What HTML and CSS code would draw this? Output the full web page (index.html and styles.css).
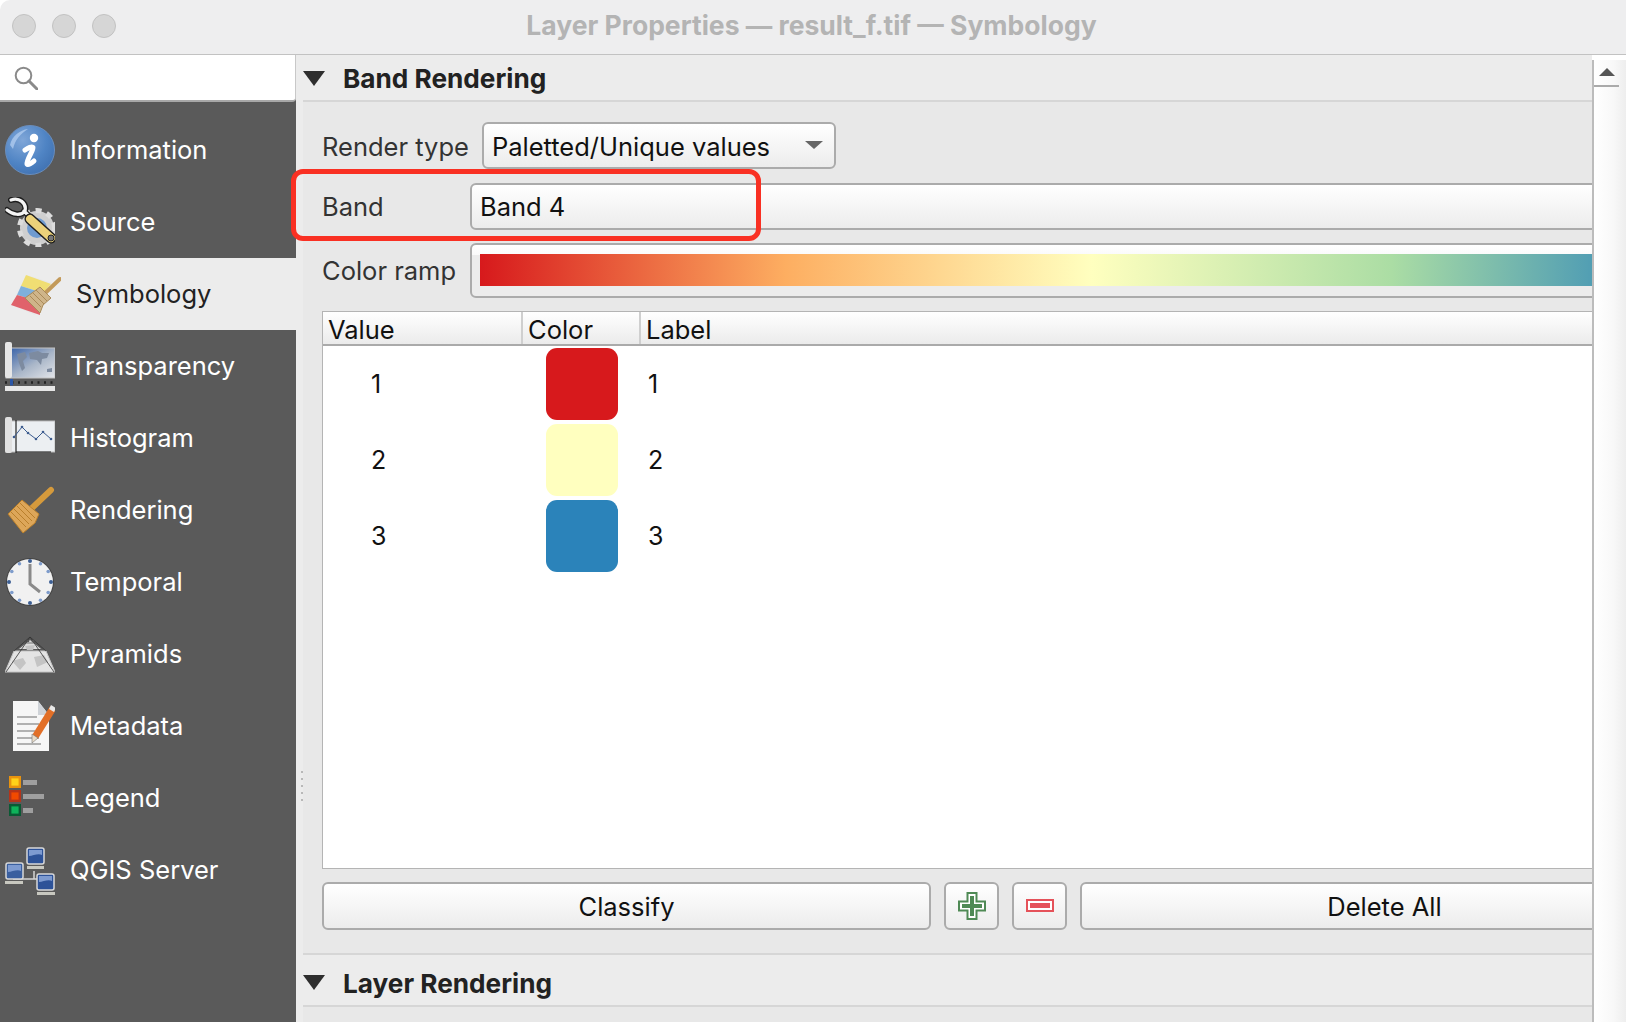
FILE: index.html
```html
<!DOCTYPE html>
<html lang="en">
<head>
<meta charset="utf-8">
<title>Layer Properties — result_f.tif — Symbology</title>
<link rel="stylesheet" href="styles.css">
</head>
<body>
<div class="window">
  <header class="titlebar">
    <div class="lights"><span class="light"></span><span class="light"></span><span class="light"></span></div>
    <div class="title">Layer Properties — result_f.tif — Symbology</div>
  </header>
  <div class="content">
    <aside class="sidebar">
      <div class="search">
        <svg class="search-icon" viewBox="0 0 24 24"><circle cx="9.5" cy="9.5" r="7.8" fill="none" stroke="#8a8a8a" stroke-width="2"/><path d="M15 15l8 8" stroke="#8a8a8a" stroke-width="3" stroke-linecap="round"/></svg>
      </div>
      <nav class="nav">
        <div class="nav-item">
          <svg class="nav-icon" viewBox="0 0 50 50"><defs><radialGradient id="ib" cx=".35" cy=".3" r=".8"><stop offset="0" stop-color="#7fa6d8"/><stop offset=".6" stop-color="#4f84c4"/><stop offset="1" stop-color="#3f70b0"/></radialGradient></defs><circle cx="25" cy="25" r="24.5" fill="url(#ib)" stroke="#6a8dbb"/><path d="M5 20C7 11 15 5 23 4 15 9 10 15 8 24z" fill="#b3cdf0" opacity=".75"/><circle cx="29" cy="13" r="4.200" fill="#fff"/><path d="M20 25c3-2 7-4 8-2.500 1 2-7 13-6 16.500 1 1.500 5-1 7-3" fill="none" stroke="#fff" stroke-width="5" stroke-linecap="round" stroke-linejoin="round"/></svg>
          <span>Information</span>
        </div>
        <div class="nav-item">
          <svg class="nav-icon" viewBox="0 0 50 50"><circle cx="32" cy="31" r="13" fill="none" stroke="#cfcfcf" stroke-width="8"/><circle cx="32" cy="31" r="17.500" fill="none" stroke="#dcdcdc" stroke-width="5" stroke-dasharray="6 5.500"/><circle cx="32" cy="31" r="10" fill="#6f9bd0"/><path d="M6 3C14 0 22 6 20 14M2 13C8 18 16 19 20 14M19 14L28 23" fill="none" stroke="#1d1d1d" stroke-width="6" stroke-linecap="round"/><path d="M6 3C14 0 22 6 20 14M2 13C8 18 16 19 20 14M19 14L28 23" fill="none" stroke="#f4f4f4" stroke-width="3.200" stroke-linecap="round"/><path d="M25 22L46 41" stroke="#1f1f1f" stroke-width="11" stroke-linecap="round"/><path d="M25 22L46 41" stroke="#ecd27a" stroke-width="8" stroke-linecap="round"/><circle cx="46" cy="41" r="3" fill="#777" stroke="#222"/></svg>
          <span>Source</span>
        </div>
        <div class="nav-item active">
          <svg class="nav-icon" viewBox="0 0 50 50"><path d="M16 6l26 8-18 32L0 36z" fill="#e8e8e8"/><path d="M15 6l25 9-8 9-22-7z" fill="#f0de73"/><path d="M10 17l22 7-8 7-18-5z" fill="#7fb0dc"/><path d="M6 26l18 5 5 11 0 4-29-10z" fill="#e0626b"/><path d="M30 28L49 10" stroke="#c39a5a" stroke-width="4" stroke-linecap="round"/><path d="M21 24l8-6 11 11-8 7-3 8-15-15z" fill="#cfb58a" stroke="#a98a59"/><path d="M19 27l11 11M22 24l11 11M25 21l11 11" stroke="#a98a59"/></svg>
          <span>Symbology</span>
        </div>
        <div class="nav-item">
          <svg class="nav-icon" viewBox="0 0 50 50"><defs><linearGradient id="mp" x1="0" y1="0" x2="1" y2="1"><stop offset="0" stop-color="#2f5ba5"/><stop offset=".55" stop-color="#a9b6c8"/><stop offset="1" stop-color="#e4e6ea"/></linearGradient></defs><rect x="1" y="7" width="49" height="30" fill="url(#mp)" stroke="#c4c4c4"/><rect x="0" y="1" width="7" height="36" rx="2" fill="#e6e6e6"/><path d="M12 13l8-2 2 5-4 4 2 7-3 3-3-8zM24 12l9-2 4 2 7 0-2 5-5 1-1 6-4-5-7-1zM42 28l5-1 0 4-5 0z" fill="#7d8ba0"/><rect x="0" y="45" width="50" height="5" fill="#e6e6e6"/><path d="M0 41.500h50" stroke="#222" stroke-width="2.500" stroke-dasharray="2 4.500"/><rect x="5" y="38" width="3" height="6.500" fill="#2a55a5"/></svg>
          <span>Transparency</span>
        </div>
        <div class="nav-item">
          <svg class="nav-icon" viewBox="0 0 50 50"><rect x="1" y="8" width="49" height="31" fill="#eceff2" stroke="#bbb"/><rect x="0" y="4" width="7" height="36" rx="2" fill="#e0e0e0"/><path d="M11 7v33M11 39h35" stroke="#222" stroke-width="1.200"/><path d="M9 24l8-10 6 6 8 6 7-7 8 7" fill="none" stroke="#3d5c8f" stroke-width="1"/><g fill="#3d5c8f"><circle cx="9" cy="24" r="1.300"/><circle cx="17" cy="14" r="1.300"/><circle cx="23" cy="20" r="1.300"/><circle cx="31" cy="26" r="1.300"/><circle cx="38" cy="19" r="1.300"/><circle cx="46" cy="26" r="1.300"/></g></svg>
          <span>Histogram</span>
        </div>
        <div class="nav-item">
          <svg class="nav-icon" viewBox="0 0 50 50"><path d="M26 24L46 5" stroke="#d59a3c" stroke-width="6" stroke-linecap="round"/><path d="M3 29L17 15 34 29l-4 9-12 10z" fill="#dda659" stroke="#b97f2b"/><path d="M6 27l15 15M9 24l15 15M12 21l15 15M15 18l15 15" stroke="#b97f2b"/></svg>
          <span>Rendering</span>
        </div>
        <div class="nav-item">
          <svg class="nav-icon" viewBox="0 0 50 50"><circle cx="25" cy="25" r="24" fill="#444"/><circle cx="25" cy="25" r="23" fill="#f1f1f1"/><g fill="#3d5f94"><circle cx="25" cy="4" r="2"/><circle cx="25" cy="46" r="2"/><circle cx="4" cy="25" r="2"/><circle cx="46" cy="25" r="2"/></g><g fill="#7d9bcb"><circle cx="14.500" cy="6.800" r="1.800"/><circle cx="35.500" cy="6.800" r="1.800"/><circle cx="6.800" cy="14.500" r="1.800"/><circle cx="43.200" cy="14.500" r="1.800"/><circle cx="6.800" cy="35.500" r="1.800"/><circle cx="43.200" cy="35.500" r="1.800"/><circle cx="14.500" cy="43.200" r="1.800"/><circle cx="35.500" cy="43.200" r="1.800"/></g><path d="M25 7v20l10 8" fill="none" stroke="#8a8a8a" stroke-width="3"/></svg>
          <span>Temporal</span>
        </div>
        <div class="nav-item">
          <svg class="nav-icon" viewBox="0 0 50 50"><path d="M0 43L9 22h32l9 21z" fill="#e4e4e4" stroke="#c4c4c4"/><path d="M14 20L25 11l11 9z" fill="#dcdcdc"/><path d="M7 32l11-3 3 5-6 7zM29 28l10-2 4 7-11 5zM20 17l10-1-2 5-6 0z" fill="#c4c4c4"/><path d="M1 43L25 8l24 35M9 22L25 8l16 14" fill="none" stroke="#333" stroke-width=".8"/><path d="M20 14h10" stroke="#555" stroke-width=".8"/><circle cx="23" cy="12" r="1.300" fill="#555"/><circle cx="28" cy="12" r="1.300" fill="#555"/></svg>
          <span>Pyramids</span>
        </div>
        <div class="nav-item">
          <svg class="nav-icon" viewBox="0 0 50 50"><path d="M8 0h25l11 14v36H8z" fill="#f6f6f6"/><path d="M33 0l11 14H33z" fill="#cfd3d8"/><path d="M12 16h20M12 23h22M12 30h18M12 37h22M12 43h24" stroke="#9a9a9a" stroke-width="1.600"/><path d="M48 7L30 36" stroke="#e26f27" stroke-width="7"/><path d="M46 4l5 3-2 4-5-3z" fill="#e8e8e8"/><path d="M27 33l6 4-6 5z" fill="#e9dcc9" stroke="#777" stroke-width=".6"/></svg>
          <span>Metadata</span>
        </div>
        <div class="nav-item">
          <svg class="nav-icon" viewBox="0 0 50 50"><g stroke-width="2.400"><rect x="5.200" y="4.200" width="9.600" height="9.600" fill="#ffd21a" stroke="#e8930f"/><rect x="5.200" y="18.200" width="9.600" height="9.600" fill="#f24a00" stroke="#b5341a"/><rect x="5.200" y="32.200" width="9.600" height="9.600" fill="#0fb35a" stroke="#0a5a34"/></g><g fill="#9f9f9f"><rect x="18" y="7" width="14" height="5"/><rect x="18" y="21" width="21" height="5"/><rect x="18" y="35" width="10" height="5"/></g></svg>
          <span>Legend</span>
        </div>
        <div class="nav-item">
          <svg class="nav-icon" viewBox="0 0 50 50"><g transform="translate(0 2)"><path d="M8 32h34M29 24v8" stroke="#d5d5d5" stroke-width="1.500"/><rect x="1" y="16" width="17" height="16" rx="2" fill="#3a5f9f" stroke="#d8d8d8" stroke-width="1.500"/><path d="M3 18h13v6C12 22 7 25 3 25z" fill="#7d9ad0"/><rect x="0" y="34" width="18" height="3" fill="#c8c8c0"/><rect x="22" y="1" width="17" height="16" rx="2" fill="#2d5298" stroke="#d8d8d8" stroke-width="1.500"/><path d="M24 3h13v5c-4-2-9 1-13 1z" fill="#7d9ad0"/><rect x="22" y="19" width="17" height="3" fill="#c8c8c0"/><rect x="32" y="27" width="17" height="16" rx="2" fill="#2d5298" stroke="#d8d8d8" stroke-width="1.500"/><path d="M34 29h13v5c-4-2-9 1-13 1z" fill="#7d9ad0"/><rect x="32" y="45" width="18" height="3" fill="#c8c8c0"/></g></svg>
          <span>QGIS Server</span>
        </div>
      </nav>
    </aside>
    <div class="sash"><span class="sash-dots"></span></div>
    <main class="viewport">
      <div class="scroll-content">
        <section class="group">
          <h2 class="group-head"><span class="caret"></span><span class="group-title">Band Rendering</span></h2>
          <div class="group-body">
            <div class="form-row render-row">
              <label class="form-label">Render type</label>
              <div class="combo combo-type"><span class="combo-text">Paletted/Unique values</span><span class="combo-arrow"></span></div>
            </div>
            <div class="form-row">
              <label class="form-label wide">Band</label>
              <div class="combo combo-fill">Band 4</div>
            </div>
            <div class="form-row ramp-row">
              <label class="form-label wide">Color ramp</label>
              <div class="ramp-box"><div class="ramp"></div></div>
            </div>
            <div class="table">
              <div class="table-head">
                <div class="th col-value">Value</div>
                <div class="th col-color">Color</div>
                <div class="th col-label">Label</div>
              </div>
              <div class="table-body">
                <div class="tr"><div class="td col-value">1</div><div class="col-color cell-swatch"><span class="swatch red"></span></div><div class="td col-label">1</div></div>
                <div class="tr"><div class="td col-value">2</div><div class="col-color cell-swatch"><span class="swatch yellow"></span></div><div class="td col-label">2</div></div>
                <div class="tr"><div class="td col-value">3</div><div class="col-color cell-swatch"><span class="swatch blue"></span></div><div class="td col-label">3</div></div>
              </div>
            </div>
            <div class="actions">
              <button class="btn btn-grow">Classify</button>
              <button class="btn btn-icon"><svg class="btn-svg" viewBox="0 0 28 28"><path d="M9.500 1h9v8.500H27v9h-8.500V27h-9v-8.500H1v-9h8.500z" fill="#fff" stroke="#4f8a55" stroke-width="2"/><path d="M12 4h4v8h8v4h-8v8h-4v-8H4v-4h8z" fill="#4f8a55"/></svg></button>
              <button class="btn btn-icon"><svg class="btn-svg" viewBox="0 0 28 28"><rect x="1" y="8" width="26" height="11" fill="#fff" stroke="#e5525a" stroke-width="2"/><rect x="4" y="11" width="20" height="5" fill="#e5525a"/></svg></button>
              <button class="btn btn-grow">Delete All</button>
            </div>
          </div>
        </section>
        <section class="group">
          <h2 class="group-head"><span class="caret"></span><span class="group-title">Layer Rendering</span></h2>
        </section>
      </div>
    </main>
    <div class="scrollbar">
      <div class="scroll-up"><span class="up-arrow"></span></div>
    </div>
  </div>
  <div class="highlight"></div>
</div>
</body>
</html>
```
FILE: styles.css
```css
* { box-sizing: border-box; }
html, body { margin: 0; height: 100%; overflow: hidden; background: #fff; }
body { font-family: Inter, "Liberation Sans", sans-serif; color: #111; }
.window { position: relative; width: 1626px; height: 1022px; display: flex; flex-direction: column; overflow: hidden; }

.titlebar { height: 55px; flex: none; display: flex; align-items: flex-start; background: #eeeeef; border-bottom: 1px solid #c2c2c2; border-top-left-radius: 10px; position: relative; }
.lights { display: flex; gap: 16px; padding-left: 12px; position: absolute; top: 14px; left: 0; }
.light { width: 24px; height: 24px; border-radius: 50%; background: #d6d6d6; border: 1px solid #c2c2c2; }
.title { width: 100%; padding-right: 3px; text-align: center; font-size: 26.500px; font-weight: 700; color: #b4b4b4; line-height: 50px; }

.content { flex: 1; min-height: 0; display: flex; }

.sidebar { width: 296px; flex: none; display: flex; flex-direction: column; background: #5a5a5a; }
.search { height: 47px; flex: none; background: #fff; border-bottom: 2px solid #a8a8a8; border-right: 1px solid #c8c8c8; border-bottom-right-radius: 4px; padding: 11px 0 0 14px; }
.search-icon { width: 24px; height: 24px; display: block; }
.nav { padding-top: 12px; display: flex; flex-direction: column; }
.nav-item { height: 72px; display: flex; align-items: center; gap: 15px; padding-left: 5px; color: #fff; font-size: 25.500px; }
.nav-item span { margin-top: -2px; }
.nav-item.active { background: #ececec; color: #222; padding-left: 11px; }
.nav-icon { width: 50px; height: 50px; flex: none; }

.sash { width: 7px; flex: none; background: #ececec; display: flex; justify-content: center; padding-top: 716px; }
.sash-dots { width: 2px; height: 34px; background: repeating-linear-gradient(to bottom, #b8b8b8 0 2px, transparent 2px 7px); margin-left: 4px; }

.viewport { flex: 1; min-width: 0; overflow: hidden; background: #e8e8e8; }
.scroll-content { width: 1386px; }

.group-head { margin: 0; height: 47px; display: flex; align-items: center; gap: 18px; background: #ececec; border-bottom: 2px solid #d6d6d6; font-size: 26.200px; font-weight: 700; color: #222; }
.group-title { margin-top: 1px; }
.caret { width: 0; height: 0; margin-top: 1px; border-left: 11px solid transparent; border-right: 11px solid transparent; border-top: 15px solid #2e2e2e; }
.group + .group .group-head { height: 54px; border-top: 2px solid #d6d6d6; }
.group + .group .group-title { margin-top: 7px; }
.group + .group .caret { margin-top: 5px; }

.group-body { padding: 20px 0 23px 19px; display: flex; flex-direction: column; gap: 14px; }
.form-row { display: flex; align-items: center; }
.form-label { font-size: 25.500px; color: #333; }
.form-label.wide { width: 148px; flex: none; }
.render-row { gap: 13px; }
.render-row .form-label { margin-top: 2px; }
.combo-text { margin-top: 2px; }
.ramp-row { margin-top: -1px; }

.combo { height: 47px; display: flex; align-items: center; padding-left: 8px; font-size: 25.500px; color: #111; background: linear-gradient(#fff, #ececec); border: 2px solid #ababab; border-radius: 6px; position: relative; }
.combo-type { width: 354px; }
.combo-fill { flex: 1; }
.combo-arrow { position: absolute; right: 11px; top: 17px; width: 0; height: 0; border-left: 9px solid transparent; border-right: 9px solid transparent; border-top: 8px solid #666; }

.ramp-box { flex: 1; height: 55px; border: 2px solid #ababab; border-radius: 6px; padding: 9px 8px; background: linear-gradient(#fff 0, #fafafa 20%, #ececec 20%); }
.ramp { height: 32px; background: linear-gradient(to right, #d7191c, #fdae61 25.500%, #ffffbf 51%, #abdda4 76%, #2b83ba); }

.table { height: 558px; margin-top: -1px; display: flex; flex-direction: column; background: #fff; border: 1px solid #b4b4b4; }
.table-head { height: 34px; flex: none; display: flex; background: linear-gradient(#fff, #ebebeb); border-bottom: 2px solid #aaa; font-size: 25.500px; }
.th { display: flex; align-items: flex-end; padding-left: 5px; line-height: 29px; border-right: 2px solid #cfcfcf; }
.col-value { width: 200px; flex: none; }
.col-color { width: 118px; flex: none; }
.col-label { flex: 1; border-right: 0; }
.table-body { flex: 1; }
.tr { height: 76px; display: flex; align-items: center; font-size: 25px; }
.td.col-value { padding-left: 48px; }
.td.col-label { padding-left: 7px; }
.cell-swatch { padding-left: 23px; display: flex; }
.swatch { width: 72px; height: 72px; border-radius: 11px; display: block; }
.red { background: #d7191c; }
.yellow { background: #ffffbf; }
.blue { background: #2b83ba; }

.actions { display: flex; gap: 13px; margin-top: -1px; }
.btn { height: 48px; font: inherit; font-size: 25.500px; color: #111; background: linear-gradient(#fff, #ececec); border: 2px solid #ababab; border-radius: 6px; padding: 0; display: flex; align-items: center; justify-content: center; }
.btn-grow { flex: 1; }
.btn-icon { width: 55px; flex: none; }
.btn-svg { width: 28px; height: 28px; }

.scrollbar { width: 34px; flex: none; margin-top: 5px; background: linear-gradient(to right, #fff, #f8f8f8 60%, #eeeeee); border-left: 2px solid #bcbcbc; }
.scroll-up { width: 25px; height: 27px; border-bottom: 2px solid #aaa; display: flex; justify-content: center; padding-top: 8px; }
.up-arrow { width: 0; height: 0; border-left: 8px solid transparent; border-right: 8px solid transparent; border-bottom: 8px solid #555; }

.highlight { position: absolute; left: 291px; top: 169px; width: 470px; height: 72px; border: 5px solid #f93023; border-radius: 12px; pointer-events: none; }
```
